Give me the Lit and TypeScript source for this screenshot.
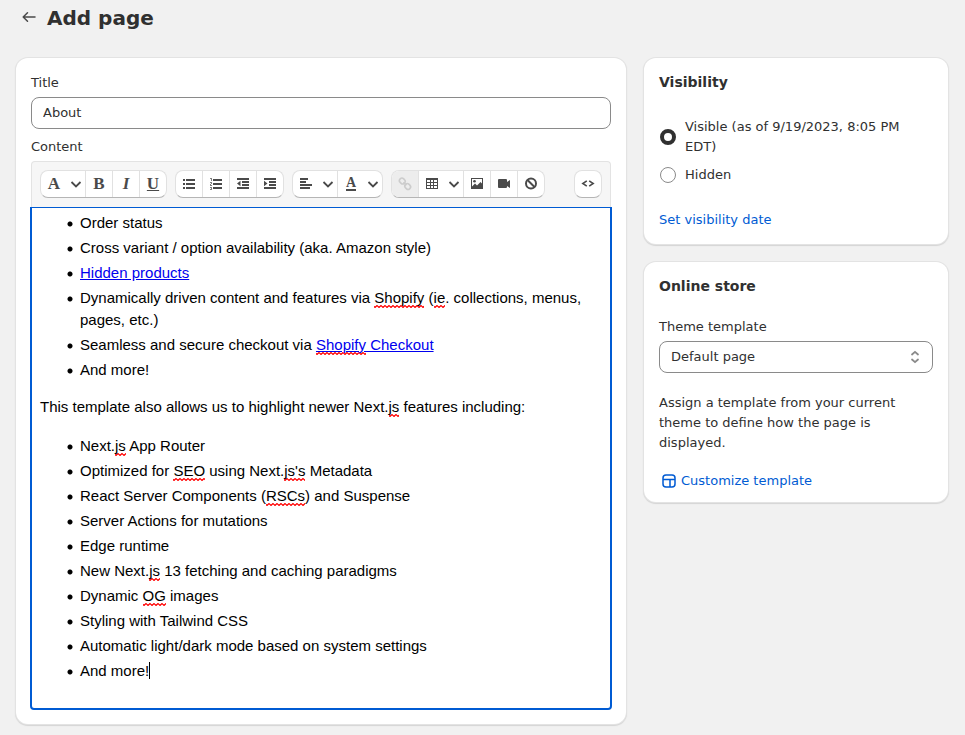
import { LitElement, html, svg, css, nothing } from "lit";
import { customElement, property, state } from "lit/decorators.js";
import { classMap } from "lit/directives/class-map.js";

const icons: Record<string, unknown> = {
  chevron: svg`<path d="M3.5 6l4.5 4.5L12.500 6" fill="none" stroke="currentColor" stroke-width="1.800"/>`,
  bullets: svg`<path d="M2 3h2v2H2zM5 3h9v2H5zM2 7h2v2H2zM5 7h9v2H5zM2 11h2v2H2zM5 11h9v2H5z"/>`,
  numbers: svg`<path d="M5 3h9v2H5zM5 7h9v2H5zM5 11h9v2H5z"/><path opacity=".7" d="M2 2h2v3H3V3H2zM2 6h2v2H3v1h1v1H2V8h1V7H2zM2 11h2v3H2v-1h1v-1H2z"/>`,
  outdent: svg`<path d="M2 2h12v2H2zM7 5h7v2H7zM7 8h7v2H7zM2 11h12v2H2zM5.500 4.800v5.400L2 7.500z"/>`,
  indent: svg`<path d="M2 2h12v2H2zM7 5h7v2H7zM7 8h7v2H7zM2 11h12v2H2zM2 4.800v5.400L5.500 7.500z"/>`,
  align: svg`<path d="M2 2h8v2H2zM2 5h6v2H2zM2 8h12v2H2zM2 11h10v2H2z"/>`,
  link: svg`<g fill="none" stroke="currentColor" stroke-width="1.600"><rect x="2.300" y="2.500" width="6" height="5" rx="2.500" transform="rotate(45 5.300 5)"/><rect x="7.700" y="8" width="6" height="5" rx="2.500" transform="rotate(45 10.700 10.500)"/><path d="M6.500 6.200l3 3"/></g>`,
  table: svg`<path fill-rule="evenodd" d="M2 2h12v11H2zM3 4v2h3V4zM7 4v2h2V4zM10 4v2h3V4zM3 7v2h3V7zM7 7v2h2V7zM10 7v2h3V7zM3 10v2h3v-2zM7 10v2h2v-2zM10 10v2h3v-2z"/>`,
  image: svg`<path fill-rule="evenodd" d="M2 2h12v11H2zM3 3v7.500l3-3 2 2 3.500-3.500L13 7.500V3z"/><circle cx="5.500" cy="5.200" r="1.300"/>`,
  video: svg`<path d="M3 3h7a1 1 0 0 1 1 1v2l3-2v8l-3-2v1a1 1 0 0 1-1 1H3a1 1 0 0 1-1-1V4a1 1 0 0 1 1-1z"/>`,
  clear: svg`<g fill="none" stroke="currentColor" stroke-width="2"><circle cx="8" cy="7.500" r="5"/><path d="M4.500 4l7 7"/></g>`,
  code: svg`<path d="M6.800 4.800L2.800 7.500l4 2.700M9.200 4.800l4 2.700-4 2.700" fill="none" stroke="currentColor" stroke-width="1.600"/>`,
};

@customElement("tool-icon")
class ToolIcon extends LitElement {
  @property() name = "";
  static styles = css`
    :host { display: flex; }
    svg { display: block; width: 16px; height: 16px; fill: currentColor; }
  `;
  render() {
    return html`<svg viewBox="0 0 16 16" aria-hidden="true">${icons[this.name]}</svg>`;
  }
}

interface Tool { label: string; icon?: string; text?: string; look?: string; menu?: boolean; disabled?: boolean; }

const toolGroups: Tool[][] = [
  [
    { label: "Formatting", text: "A", menu: true },
    { label: "Bold", text: "B" },
    { label: "Italic", text: "I", look: "italic" },
    { label: "Underline", text: "U", look: "underline" },
  ],
  [
    { label: "Bulleted list", icon: "bullets" },
    { label: "Numbered list", icon: "numbers" },
    { label: "Outdent", icon: "outdent" },
    { label: "Indent", icon: "indent" },
  ],
  [
    { label: "Alignment", icon: "align", menu: true },
    { label: "Color", text: "A", look: "color", menu: true },
  ],
  [
    { label: "Insert link", icon: "link", disabled: true },
    { label: "Insert table", icon: "table", menu: true },
    { label: "Insert image", icon: "image" },
    { label: "Insert video", icon: "video" },
    { label: "Clear formatting", icon: "clear" },
  ],
  [{ label: "Show HTML", icon: "code" }],
];

@customElement("editor-toolbar")
class EditorToolbar extends LitElement {
  static styles = css`
    :host {
      display: flex; flex-wrap: wrap; gap: 8px; padding: 8px 8px 9px;
      border: 1px solid #e3e3e3; border-bottom: 0; border-radius: 4px 4px 0 0;
      background: #f6f6f6; color: #4a4a4a;
    }
    .group {
      display: flex; height: 28px; box-sizing: border-box; overflow: hidden;
      border: 1px solid #e1e1e1; border-bottom-color: #b5b5b5; border-radius: 8px; background: #fff;
    }
    .group:last-child { margin-left: auto; }
    button {
      display: flex; align-items: center; justify-content: center; gap: 6px;
      box-sizing: content-box; width: 26px; padding: 0; margin: 0;
      border: 0; border-left: 1px solid #e1e1e1; background: none; color: inherit;
    }
    button:first-child { border-left: 0; }
    .menu { justify-content: flex-start; width: 39px; padding-left: 5px; }
    .disabled { background: #ededed; color: #cccccc; }
    .glyph { display: flex; justify-content: center; width: 16px; font: bold 17px/18px "Liberation Serif", serif; }
    .italic { font-style: italic; }
    .underline { text-decoration: underline; text-decoration-thickness: 1px; }
    .color { width: 10px; margin: 0 3px; border-bottom: 2px solid; font-size: 14px; line-height: 12px; }
  `;
  render() {
    return toolGroups.map(
      (group) => html`<div class="group">
        ${group.map(
          (t) => html`<button
            type="button"
            aria-label=${t.label}
            ?disabled=${t.disabled}
            class=${classMap({ menu: !!t.menu, disabled: !!t.disabled })}
          >
            ${t.icon ? html`<tool-icon name=${t.icon}></tool-icon>` : html`<span class="glyph ${t.look ?? ""}">${t.text}</span>`}
            ${t.menu ? html`<tool-icon name="chevron"></tool-icon>` : nothing}
          </button>`
        )}
      </div>`
    );
  }
}

const sp = (word: string) => html`<span class="misspelt">${word}</span>`;

@customElement("rich-text")
class RichText extends LitElement {
  static styles = css`
    :host { display: block; }
    .page {
      margin: 0 -1px; padding: 4px 8px 26px; border: 2px solid #005bd3; border-top-width: 1px;
      border-radius: 0 0 4px 4px; outline: 0; background: #fff; color: #000;
      font: 15px/22px "Liberation Sans", Arial, sans-serif;
    }
    ul { margin: 0; padding-left: 27px; list-style: none; }
    li { padding-left: 13px; background: radial-gradient(circle at 3px 12px, #000 2px, transparent 3px) no-repeat; }
    li + li { margin-top: 3px; }
    p { margin: 15px 0 17px; }
    a { color: #0000ee; }
    .misspelt {
      padding-bottom: 2px;
      background: url("data:image/svg+xml,%3Csvg xmlns='http://www.w3.org/2000/svg' width='4' height='3'%3E%3Cpath d='M-1 .5L1 2.500 3 .5 5 2.500' fill='none' stroke='red' stroke-width='1.200'/%3E%3C/svg%3E") left bottom repeat-x;
    }
    .caret { border-right: 1px solid #000; }
  `;
  render() {
    return html`<div class="page" role="textbox" aria-multiline="true" aria-label="Content" tabindex="0">
      <ul>
        <li>Order status</li>
        <li>Cross variant / option availability (aka. Amazon style)</li>
        <li><a href="#hidden-products">Hidden products</a></li>
        <li>Dynamically driven content and features via ${sp("Shopify")} (${sp("ie")}. collections, menus, pages, etc.)</li>
        <li>Seamless and secure checkout via <a href="#checkout">${sp("Shopify")} Checkout</a></li>
        <li>And more!</li>
      </ul>
      <p>This template also allows us to highlight newer Next.${sp("js")} features including:</p>
      <ul>
        <li>Next.${sp("js")} App Router</li>
        <li>Optimized for ${sp("SEO")} using Next.${sp("js's")} Metadata</li>
        <li>React Server Components (${sp("RSCs")}) and Suspense</li>
        <li>Server Actions for mutations</li>
        <li>Edge runtime</li>
        <li>New Next.${sp("js")} 13 fetching and caching paradigms</li>
        <li>Dynamic ${sp("OG")} images</li>
        <li>Styling with Tailwind CSS</li>
        <li>Automatic light/dark mode based on system settings</li>
        <li><span class="caret">And more!</span></li>
      </ul>
    </div>`;
  }
}

@customElement("app-root")
class AppRoot extends LitElement {
  @state() private visible = true;

  static styles = css`
    :host {
      display: block; box-sizing: border-box; min-height: 100vh; padding: 0 17px 10px 16px;
      background: #f1f1f1; color: #303030; font: 13px/20px "DejaVu Sans", sans-serif;
    }
    h1, h2, p { margin: 0; }
    .header { display: flex; align-items: center; gap: 8px; height: 36px; margin-bottom: 22px; padding-left: 3px; }
    .header h1 { font-size: 20px; line-height: 24px; }
    .back { display: flex; color: #4a4a4a; }
    .icon { display: block; width: 20px; height: 20px; flex: none; }
    .columns { display: grid; grid-template-columns: minmax(0, 1fr) 304px; gap: 18px; align-items: start; }
    .side { display: grid; gap: 18px; }
    .card {
      padding: 15px 15px 14px; border-radius: 12px; background: #fff; min-width: 0;
      box-shadow: 0 0 0 1px #e3e3e3, 0 1px 1px 1px #d4d4d4;
    }
    .online { padding-bottom: 11px; }
    .card h2 { font-size: 14px; line-height: 18px; }
    .label { display: block; margin-bottom: 4px; }
    .field {
      display: block; box-sizing: border-box; width: 100%; height: 32px; margin: 0; padding: 0 11px 2px;
      border: 1px solid #8a8a8a; border-radius: 8px; background: #fff; color: inherit; font: inherit;
      appearance: none;
    }
    .select .field { padding-bottom: 0; }
    .content-label { margin-top: 8px; }
    .choices { display: grid; gap: 8px; margin: 26px 0 25px; padding: 0; border: 0; }
    .choice { display: flex; align-items: center; gap: 8px; }
    .choice input {
      appearance: none; flex: none; box-sizing: border-box; width: 16px; height: 16px; margin: 0 1px;
      border: 1px solid #8a8a8a; border-radius: 50%; background: #fff;
    }
    .choice input:checked { border: 4px solid #303030; }
    a { color: #005bd3; text-decoration: none; }
    .template { margin-top: 22px; }
    .select { display: grid; align-items: center; }
    .select > * { grid-area: 1 / 1; }
    .select .icon { justify-self: end; margin-right: 8px; pointer-events: none; color: #8a8a8a; }
    .help { margin: 20px 0 18px; }
    .customize { display: flex; align-items: center; gap: 2px; }
  `;

  render() {
    return html`
      <header class="header">
        <a class="back" href="#pages" aria-label="Back to pages">
          <svg class="icon" viewBox="0 0 20 20" fill="none" stroke="currentColor" stroke-width="1.500" stroke-linecap="round" stroke-linejoin="round"><path d="M16 9H4.500M8.500 4.800L4.200 9l4.300 4.200"/></svg>
        </a>
        <h1>Add page</h1>
      </header>
      <main class="columns">
        <section class="card">
          <label class="label" for="title">Title</label>
          <input class="field" id="title" type="text" value="About" />
          <span class="label content-label">Content</span>
          <editor-toolbar></editor-toolbar>
          <rich-text></rich-text>
        </section>
        <div class="side">
          <section class="card">
            <h2>Visibility</h2>
            <fieldset class="choices" aria-label="Visibility">
              <label class="choice">
                <input type="radio" name="visibility" .checked=${this.visible} @change=${() => (this.visible = true)} />
                <span>Visible (as of 9/19/2023, 8:05 PM EDT)</span>
              </label>
              <label class="choice">
                <input type="radio" name="visibility" .checked=${!this.visible} @change=${() => (this.visible = false)} />
                <span>Hidden</span>
              </label>
            </fieldset>
            <a href="#visibility-date">Set visibility date</a>
          </section>
          <section class="card online">
            <h2>Online store</h2>
            <label class="label template" for="template">Theme template</label>
            <div class="select">
              <select class="field" id="template"><option>Default page</option></select>
              <svg class="icon" viewBox="0 0 20 20" fill="none" stroke="currentColor" stroke-width="1.800" stroke-linecap="round" stroke-linejoin="round"><path d="M7 7.500L10 4.800l3 2.700M7 12.500l3 2.700 3-2.700"/></svg>
            </div>
            <p class="help">Assign a template from your current theme to define how the page is displayed.</p>
            <a class="customize" href="#customize">
              <svg class="icon" viewBox="0 0 20 20" fill="none" stroke="currentColor" stroke-width="1.500"><rect x="4" y="4" width="12" height="12" rx="3"/><path d="M4 8.500h12M11 8.500V16"/></svg>
              Customize template
            </a>
          </section>
        </div>
      </main>
    `;
  }
}
